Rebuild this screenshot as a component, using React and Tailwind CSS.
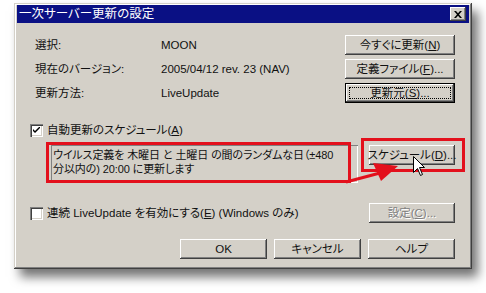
import React from 'react';

const raised =
  'shadow-[inset_-1px_-1px_#404040,inset_1px_1px_#ffffff,inset_-2px_-2px_#808080,inset_2px_2px_#d4d0c8]';

function Btn({ children, className = '', def = false, disabled = false }) {
  if (def) {
    return (
      <div className={`relative h-5 border border-black bg-[#d4d0c8] flex items-center justify-center whitespace-nowrap ${className}`}>
        <div className="absolute inset-0 shadow-[inset_-1px_-1px_#404040,inset_1px_1px_#ffffff,inset_-2px_-2px_#808080]" />
        <div className="absolute inset-[3px] border border-dotted border-black" />
        <span className="relative">{children}</span>
      </div>
    );
  }
  return (
    <div
      className={`h-5 bg-[#d4d0c8] flex items-center justify-center whitespace-nowrap ${raised} ${
        disabled ? 'text-[#808080] [text-shadow:1px_1px_#ffffff]' : ''
      } ${className}`}
    >
      {children}
    </div>
  );
}

function Check({ checked }) {
  return (
    <div className="w-[13px] h-[13px] bg-white shadow-[inset_1px_1px_#808080,inset_2px_2px_#404040,inset_-1px_-1px_#ffffff,inset_-2px_-2px_#d4d0c8] flex items-center justify-center shrink-0">
      {checked && (
        <svg width="7" height="7" viewBox="0 0 7 7">
          <path d="M0 2 L0 4 L2 6 L7 1 L7 -1 L2 4 Z" fill="#000" />
        </svg>
      )}
    </div>
  );
}

const U = ({ children }) => <span className="underline underline-offset-1">{children}</span>;

export default function App() {
  return (
    <div className="relative w-[486px] h-[293px] bg-white overflow-hidden font-['Liberation_Sans','Noto_Sans_CJK_JP',sans-serif] [font-feature-settings:'palt'] text-[11.5px] leading-[15px] text-[#111]">
      <div className="absolute left-[14px] top-[3px] w-[458px] h-[266px] bg-[#d4d0c8] shadow-[6px_8px_10px_rgba(0,0,0,0.55)]">
        <div className="absolute inset-0 pointer-events-none shadow-[inset_-1px_-1px_#404040,inset_1px_1px_#d4d0c8,inset_-2px_-2px_#808080,inset_2px_2px_#ffffff]" />
        {/* title bar */}
        <div className="relative mt-[2px] mx-[3px] h-[18px] bg-[#0a1084] flex items-center justify-between pl-[2px] pr-[3px]">
          <span className="text-white text-[12.5px]">一次サーバー更新の設定</span>
          <div className={`w-4 h-[14px] bg-[#d4d0c8] flex items-center justify-center ${raised}`}>
            <svg width="8" height="7" viewBox="0 0 8 7">
              <path d="M0 0h2l2 2.2L6 0h2L5 3.5 8 7H6L4 4.8 2 7H0l3-3.5z" fill="#000" />
            </svg>
          </div>
        </div>

        <div className="relative pl-[16px] pr-[17px] pt-[12px]">
          {/* info rows */}
          <div className="flex flex-col gap-1">
            <div className="flex items-center h-5">
              <span className="w-[131px] pl-[5px]">選択:</span>
              <span className="flex-1">MOON</span>
              <Btn className="w-[110px]">
                今すぐに更新(<U>N</U>)
              </Btn>
            </div>
            <div className="flex items-center h-5">
              <span className="w-[131px] pl-[5px]">現在のバージョン:</span>
              <span className="flex-1">2005/04/12 rev. 23 (NAV)</span>
              <Btn className="w-[110px]">
                定義ファイル(<U>F</U>)...
              </Btn>
            </div>
            <div className="flex items-center h-5">
              <span className="w-[131px] pl-[5px]">更新方法:</span>
              <span className="flex-1">LiveUpdate</span>
              <Btn def className="w-[110px]">
                更新元(<U>S</U>)...
              </Btn>
            </div>
          </div>

          {/* auto schedule */}
          <div className="mt-[17px] h-5 flex items-center gap-[4px]">
            <Check checked />
            <span>
              自動更新のスケジュール(<U>A</U>)
            </span>
          </div>
          <div className="mt-[5px] flex items-start">
            <div className="ml-[21px] w-[307px] h-[38px] shadow-[inset_1px_1px_#808080,inset_-1px_-1px_#ffffff] pl-[2px] pt-[3px] whitespace-nowrap overflow-hidden text-[11px] leading-[14px] tracking-[-0.1px]">
              ウイルス定義を 木曜日 と 土曜日 の間のランダムな日（±480
              <br />
              分以内の) 20:00 に更新します
            </div>
            <Btn className="ml-[11px] w-[86px]">
              スケジュール(<U>D</U>)...
            </Btn>
          </div>

          {/* continuous */}
          <div className="mt-[20px] h-5 flex items-center">
            <Check />
            <span className="ml-[4px] flex-1">
              連続 LiveUpdate を有効にする(<U>E</U>) (Windows のみ)
            </span>
            <Btn disabled className="w-[86px]">
              設定(<U>C</U>)...
            </Btn>
          </div>

          {/* bottom buttons */}
          <div className="mt-[16px] flex justify-end gap-[7px]">
            <Btn className="w-[87px]">OK</Btn>
            <Btn className="w-[87px]">キャンセル</Btn>
            <Btn className="w-[87px]">ヘルプ</Btn>
          </div>
        </div>
      </div>

      {/* annotations */}
      <div className="absolute left-[46px] top-[142px] w-[305px] h-[41px] border-[3px] border-[#e3101c]" />
      <div className="absolute left-[361px] top-[138px] w-[104px] h-[34px] border-[3px] border-[#e3101c]" />
      <svg className="absolute left-0 top-0" width="486" height="293" viewBox="0 0 486 293">
        <line x1="346" y1="182" x2="380" y2="173" stroke="#e3101c" strokeWidth="3" />
        <polygon points="398,166 373,163 381,181" fill="#e3101c" />
      </svg>
      <svg className="absolute left-[413px] top-[156px]" width="13" height="21" viewBox="0 0 13 21">
        <path
          d="M0.5 0.5 L0.5 16.5 L4.5 12.5 L7.5 19.5 L9.5 18.5 L6.5 11.5 L11.5 11.5 Z"
          fill="#fff"
          stroke="#000"
          strokeWidth="1"
        />
      </svg>
    </div>
  );
}
